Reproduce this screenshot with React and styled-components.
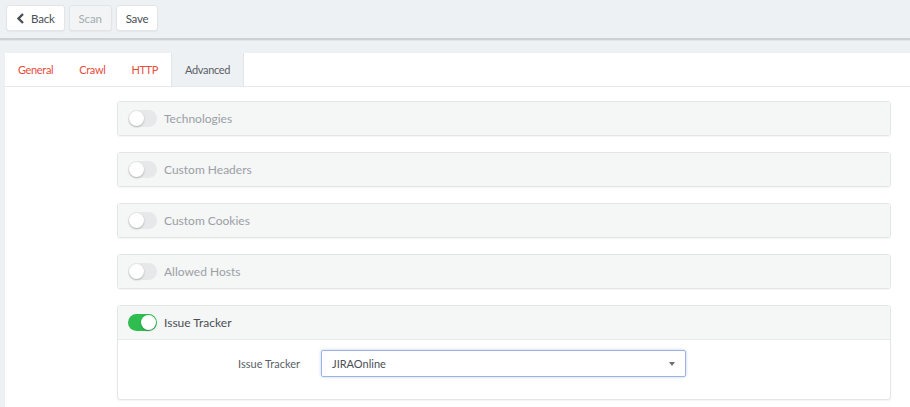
import React from 'react';
import styled, { createGlobalStyle } from 'styled-components';

const GlobalStyle = createGlobalStyle`
    html, body {
        margin: 0;
        padding: 0;
        background: #eef1f3;
        font-family: Lato, "Open Sans", sans-serif;
        font-size: 13px;
    }
`;

const Toolbar = styled.div`
    display: flex;
    gap: 4px;
    padding: 5px 6px;
    height: 28px;
    border-bottom: 2px solid #cdd1d4;
    box-shadow: 0 1px 0 #e2e5e7;
`;

const ToolButton = styled.button`
    display: flex;
    align-items: center;
    gap: 6px;
    height: 26px;
    padding: 0 9px;
    border: 1px solid #e2e5e7;
    border-radius: 3px;
    background: ${p => (p.disabled ? '#f2f4f5' : '#fff')};
    color: ${p => (p.disabled ? '#a6abb0' : '#4a4f54')};
    font-family: inherit;
    font-size: 11.5px;
    letter-spacing: -0.2px;
    box-shadow: 0 1px 1px rgba(0, 0, 0, 0.04);
`;

const Main = styled.div`
    margin: 13px 0 0 5px;
    background: #fff;
    min-height: 360px;
`;

const Tabs = styled.div`
    display: flex;
    border-bottom: 1px solid #e6e9eb;
    height: 33px;
`;

const Tab = styled.div`
    display: flex;
    align-items: center;
    padding: 0 13px;
    font-size: 11px;
    letter-spacing: -0.35px;
    color: ${p => (p.active ? '#5a6066' : '#e74c3c')};
    background: ${p => (p.active ? '#eef1f3' : 'transparent')};
    border-left: ${p => (p.active ? '1px solid #e2e5e7' : 'none')};
    border-right: ${p => (p.active ? '1px solid #e2e5e7' : 'none')};
`;

const Sections = styled.div`
    display: flex;
    flex-direction: column;
    gap: 16px;
    padding: 14px 19px 0 112px;
`;

const Panel = styled.div`
    border: 1px solid #e3e6e8;
    border-radius: 3px;
    background: #fff;
    box-shadow: 0 1px 1px rgba(0, 0, 0, 0.04);
`;

const PanelHead = styled.div`
    display: flex;
    align-items: center;
    gap: 7px;
    height: 33px;
    padding: 0 10px;
    background: #f5f6f6;
    border-bottom: ${p => (p.open ? '1px solid #e8ebec' : 'none')};
    color: ${p => (p.open ? '#4a4f54' : '#9aa0a5')};
    font-size: 12px;
`;

const Switch = styled.span`
    position: relative;
    width: 29px;
    height: 17px;
    border-radius: 9px;
    background: ${p => (p.on ? '#2fbd4f' : '#e6e8e9')};
    flex-shrink: 0;
    &::after {
        content: '';
        position: absolute;
        top: 1px;
        left: ${p => (p.on ? '13px' : '1px')};
        width: 15px;
        height: 15px;
        border-radius: 50%;
        background: #fff;
        box-shadow: 0 1px 2px rgba(0, 0, 0, 0.25);
    }
`;

const PanelBody = styled.div`
    display: flex;
    align-items: center;
    padding: 10px 0 22px;
`;

const FieldLabel = styled.label`
    width: 182px;
    text-align: right;
    padding-right: 21px;
    color: #5a6066;
    font-size: 11px;
`;

const Select = styled.div`
    display: flex;
    align-items: center;
    justify-content: space-between;
    width: 343px;
    height: 25px;
    padding: 0 10px;
    border: 1px solid #9db3df;
    border-radius: 2px;
    box-shadow: 0 0 3px rgba(102, 140, 220, 0.45);
    color: #4a4f54;
    font-size: 11px;
`;

const Caret = styled.span`
    width: 0;
    height: 0;
    border-left: 3.5px solid transparent;
    border-right: 3.5px solid transparent;
    border-top: 4px solid #6b7075;
`;

const sections = ['Technologies', 'Custom Headers', 'Custom Cookies', 'Allowed Hosts'];

export default function App() {
    return (
        <>
            <GlobalStyle />
            <Toolbar>
                <ToolButton>
                    <svg width="9" height="11" viewBox="0 0 9 11">
                        <path d="M7 1 L2.5 5.5 L7 10" fill="none" stroke="#4a4f54" strokeWidth="2.4" />
                    </svg>
                    Back
                </ToolButton>
                <ToolButton disabled>Scan</ToolButton>
                <ToolButton>Save</ToolButton>
            </Toolbar>
            <Main>
                <Tabs>
                    <Tab>General</Tab>
                    <Tab>Crawl</Tab>
                    <Tab>HTTP</Tab>
                    <Tab active>Advanced</Tab>
                </Tabs>
                <Sections>
                    {sections.map(s => (
                        <Panel key={s}>
                            <PanelHead>
                                <Switch />
                                {s}
                            </PanelHead>
                        </Panel>
                    ))}
                    <Panel>
                        <PanelHead open>
                            <Switch on />
                            Issue Tracker
                        </PanelHead>
                        <PanelBody>
                            <FieldLabel>Issue Tracker</FieldLabel>
                            <Select>
                                JIRAOnline
                                <Caret />
                            </Select>
                        </PanelBody>
                    </Panel>
                </Sections>
            </Main>
        </>
    );
}
